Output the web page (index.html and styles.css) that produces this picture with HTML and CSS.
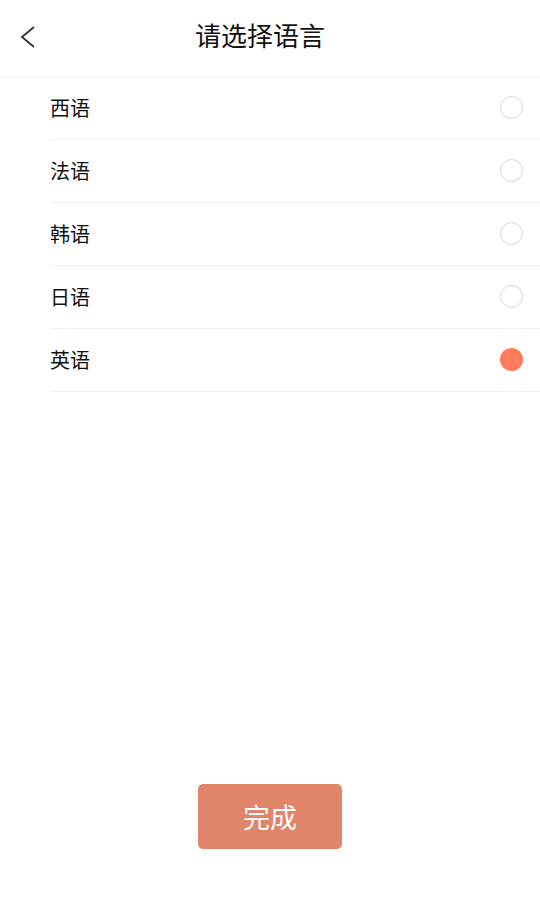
FILE: index.html
```html
<!DOCTYPE html>
<html lang="zh-CN">
<head>
  <meta charset="utf-8">
  <title>请选择语言</title>
  <link rel="stylesheet" href="styles.css">
</head>
<body>
  <div class="page">
    <header class="topbar">
      <button class="back" aria-label="返回">
        <svg width="16" height="24" viewBox="0 0 16 24">
          <polyline points="14,2 2,12 14,22" fill="none" stroke="#333" stroke-width="1.8" stroke-linejoin="miter"/>
        </svg>
      </button>
      <h1 class="title">请选择语言</h1>
    </header>

    <ul class="lang-list">
      <li class="lang-item"><span>西语</span><i class="radio"></i></li>
      <li class="lang-item"><span>法语</span><i class="radio"></i></li>
      <li class="lang-item"><span>韩语</span><i class="radio"></i></li>
      <li class="lang-item"><span>日语</span><i class="radio"></i></li>
      <li class="lang-item"><span>英语</span><i class="radio checked"></i></li>
    </ul>

    <div class="footer">
      <button class="done">完成</button>
    </div>
  </div>
</body>
</html>
```

FILE: styles.css
```css
* {
  box-sizing: border-box;
}

body {
  margin: 0;
  background: #fff;
  font-family: "Noto Sans CJK SC", "Noto Sans", sans-serif;
  color: #111;
}

.page {
  display: flex;
  flex-direction: column;
  height: 924px;
}

.topbar {
  position: relative;
  height: 77px;
  border-bottom: 1px solid #f0f0f0;
  display: flex;
  align-items: center;
  justify-content: center;
  padding-right: 20px;
}

.back {
  position: absolute;
  left: 20px;
  top: 25px;
  padding: 0;
  border: none;
  background: none;
  display: flex;
}

.title {
  margin: 0 0 8px;
  font-size: 26px;
  font-weight: normal;
  color: #111;
}

.lang-list {
  list-style: none;
  margin: 0;
  padding: 0 0 0 50px;
}

.lang-item {
  height: 63px;
  border-bottom: 1px solid #f0f0f0;
  display: flex;
  align-items: center;
  justify-content: space-between;
  padding: 0 17px 2px 0;
  font-size: 20px;
}

.radio {
  width: 23px;
  height: 23px;
  border-radius: 50%;
  border: 1px solid #d4d4d4;
}

.radio.checked {
  border: none;
  background: #ff7d5c;
}

.footer {
  margin-top: auto;
  padding-bottom: 75px;
  display: flex;
  justify-content: center;
}

.done {
  width: 144px;
  height: 65px;
  border: none;
  border-radius: 5px;
  background: #e0846a;
  color: #fff;
  font-family: inherit;
  font-size: 27px;
}
```
